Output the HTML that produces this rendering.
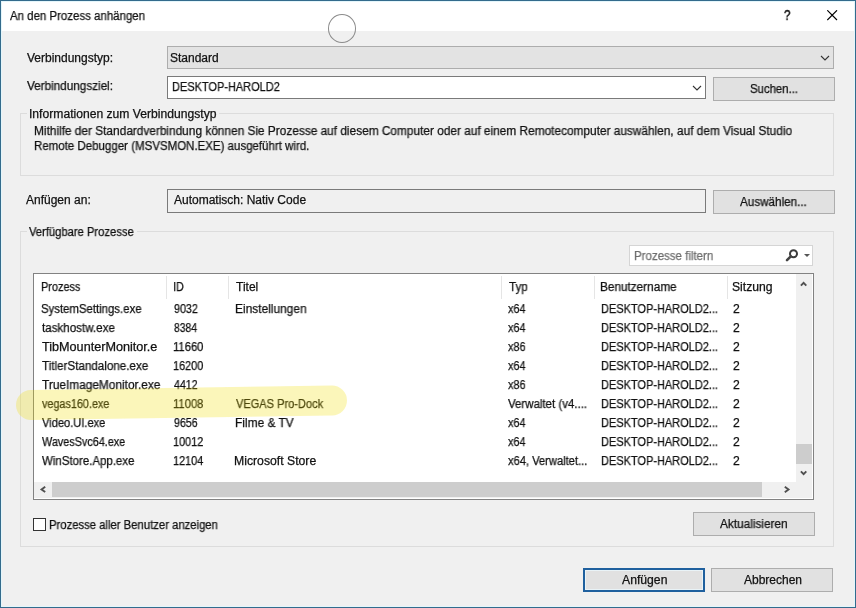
<!DOCTYPE html>
<html><head><meta charset="utf-8"><style>
*{margin:0;padding:0;box-sizing:border-box}
html,body{width:856px;height:608px;overflow:hidden;background:#f0f0f0}
body{position:relative;font-family:"Liberation Sans",sans-serif;font-size:12px;color:#000}
.a{position:absolute}
.t{position:absolute;white-space:nowrap;line-height:16px;font-size:12px;transform-origin:0 0;color:#111;will-change:transform;-webkit-text-stroke-width:0.25px}
.btn{position:absolute;background:#e1e1e1;border:1px solid #adadad}
.grp{position:absolute;border:1px solid #dcdcdc}
</style></head><body>

<div class="a" style="left:0;top:0;width:856px;height:608px;border:1px solid #336b8c"></div>
<div class="a" style="left:1px;top:1px;width:854px;height:30px;background:#fff"></div>
<div class="a" style="left:1px;top:1px;width:854px;height:606px;border:1px solid #e4f6fb"></div>
<div class="t" style="left:783.5px;top:7px;font-size:14px;-webkit-text-stroke-width:0.45px;transform:scaleX(0.82)">?</div>
<svg class="a" style="left:827px;top:10px" width="11" height="11" viewBox="0 0 11 11"><path d="M0.3 0.3L10 10M10 0.3L0.3 10" stroke="#000" stroke-width="1.15"/></svg>
<div class="a" style="left:327.5px;top:13.5px;width:28.5px;height:29px;border:1.5px solid #8c8c8c;border-radius:50%"></div>

<div class="a" style="left:167px;top:46px;width:667px;height:23px;background:#e3e3e3;border:1px solid #adadad"></div>
<svg class="a" style="left:820px;top:55px" width="10" height="6" viewBox="0 0 10 6"><path d="M1 1L5 5L9 1" stroke="#333" fill="none" stroke-width="1.1"/></svg>

<div class="a" style="left:167px;top:76px;width:539px;height:23px;background:#fff;border:1px solid #7a7a7a"></div>
<svg class="a" style="left:692px;top:85px" width="10" height="6" viewBox="0 0 10 6"><path d="M1 1L5 5L9 1" stroke="#333" fill="none" stroke-width="1.1"/></svg>
<div class="btn" style="left:713px;top:77px;width:122px;height:24px"></div>

<div class="grp" style="left:20px;top:113px;width:814px;height:63px"></div>
<div class="a" style="left:27px;top:108px;width:192px;height:10px;background:#f0f0f0"></div>

<div class="a" style="left:167px;top:189px;width:539px;height:24px;background:#f0f0f0;border:1px solid #7a7a7a"></div>
<div class="btn" style="left:713px;top:190px;width:122px;height:24px"></div>

<div class="grp" style="left:20px;top:231px;width:814px;height:316px"></div>
<div class="a" style="left:27px;top:226px;width:110px;height:10px;background:#f0f0f0"></div>

<div class="a" style="left:629px;top:245px;width:184px;height:21px;background:#fff;border:1px solid #d5d5d5"></div>
<svg class="a" style="left:782px;top:248px" width="30" height="16" viewBox="0 0 30 16">
<circle cx="11.5" cy="5.7" r="3.5" stroke="#3c3c3c" stroke-width="2" fill="none"/>
<path d="M8.8 8.4L5 12.2" stroke="#444" stroke-width="2.6" stroke-linecap="round"/>
<path d="M22 6L28 6L25 9Z" fill="#555"/>
</svg>

<div class="a" style="left:33px;top:273px;width:781px;height:227px;background:#fff;border:1px solid #828282"></div>
<div class="a" style="left:796px;top:274px;width:16px;height:224px;background:#f0f0f0"></div>
<div class="a" style="left:34px;top:482px;width:778px;height:16px;background:#f0f0f0"></div>
<div class="a" style="left:52px;top:482px;width:710px;height:15px;background:#cdcdcd"></div>
<div class="a" style="left:796px;top:444px;width:16px;height:20px;background:#cdcdcd"></div>
<div class="a" style="left:812px;top:274px;width:1px;height:225px;background:#fff"></div>
<div class="a" style="left:34px;top:498px;width:779px;height:1px;background:#fff"></div>
<svg class="a" style="left:798px;top:279px" width="12" height="10" viewBox="0 0 12 10"><path d="M2.9 6.6L5.6 3.8L8.3 6.6" stroke="#505050" fill="none" stroke-width="1.9"/></svg>
<svg class="a" style="left:798px;top:467px" width="12" height="10" viewBox="0 0 12 10"><path d="M2.9 4.4L5.6 7.2L8.3 4.4" stroke="#505050" fill="none" stroke-width="1.9"/></svg>
<svg class="a" style="left:38px;top:484px" width="10" height="12" viewBox="0 0 10 12"><path d="M7.2 2.7L3.5 5.4L7.2 8.1" stroke="#505050" fill="none" stroke-width="1.9"/></svg>
<svg class="a" style="left:782px;top:484px" width="10" height="12" viewBox="0 0 10 12"><path d="M2.8 2.8L6.5 5.5L2.8 8.2" stroke="#505050" fill="none" stroke-width="1.9"/></svg>
<div class="a" style="left:166px;top:276px;width:1px;height:23px;background:#e5e5e5"></div><div class="a" style="left:228px;top:276px;width:1px;height:23px;background:#e5e5e5"></div><div class="a" style="left:501px;top:276px;width:1px;height:23px;background:#e5e5e5"></div><div class="a" style="left:594px;top:276px;width:1px;height:23px;background:#e5e5e5"></div><div class="a" style="left:727px;top:276px;width:1px;height:23px;background:#e5e5e5"></div>
<div class="a" style="left:33px;top:518px;width:13px;height:13px;border:1px solid #333;background:#fff"></div>
<div class="btn" style="left:693px;top:512px;width:122px;height:24px"></div>
<div class="btn" style="left:583px;top:568px;width:122px;height:24px;border:2px solid #1f609e;box-shadow:inset 0 0 0 1px #e9f3f7"></div>
<div class="btn" style="left:711px;top:568px;width:122px;height:24px"></div>

<div class="t" style="left:9.70px;top:8px;transform:scaleX(0.9546);">An den Prozess anhängen</div>
<div class="t" style="left:26.50px;top:50px;">Verbindungstyp:</div>
<div class="t" style="left:170.10px;top:50px;">Standard</div>
<div class="t" style="left:26.50px;top:78px;transform:scaleX(0.9770);">Verbindungsziel:</div>
<div class="t" style="left:172.19px;top:79px;transform:scaleX(0.9145);">DESKTOP-HAROLD2</div>
<div class="t" style="left:749.85px;top:81px;transform:scaleX(0.9469);">Suchen...</div>
<div class="t" style="left:28.69px;top:106px;transform:scaleX(1.0109);">Informationen zum Verbindungstyp</div>
<div class="t" style="left:33.81px;top:123px;transform:scaleX(0.9876);">Mithilfe der Standardverbindung können Sie Prozesse auf diesem Computer oder auf einem Remotecomputer auswählen, auf dem Visual Studio</div>
<div class="t" style="left:33.84px;top:138px;transform:scaleX(0.9580);">Remote Debugger (MSVSMON.EXE) ausgeführt wird.</div>
<div class="t" style="left:26.40px;top:192px;">Anfügen an:</div>
<div class="t" style="left:173.80px;top:192px;">Automatisch: Nativ Code</div>
<div class="t" style="left:740.30px;top:194px;transform:scaleX(0.9735);">Auswählen...</div>
<div class="t" style="left:29.30px;top:224px;transform:scaleX(0.9339);">Verfügbare Prozesse</div>
<div class="t" style="left:633.64px;top:248px;transform:scaleX(0.9593);color:#6d6d6d">Prozesse filtern</div>
<div class="t" style="left:40.59px;top:279px;transform:scaleX(0.9095);">Prozess</div>
<div class="t" style="left:172.59px;top:279px;transform:scaleX(0.9091);">ID</div>
<div class="t" style="left:235.50px;top:279px;">Titel</div>
<div class="t" style="left:508.60px;top:279px;transform:scaleX(0.9632);">Typ</div>
<div class="t" style="left:600.02px;top:279px;transform:scaleX(0.9818);">Benutzername</div>
<div class="t" style="left:732.39px;top:279px;transform:scaleX(1.0132);">Sitzung</div>
<div class="t" style="left:40.55px;top:301px;transform:scaleX(0.9476);">SystemSettings.exe</div>
<div class="t" style="left:173.50px;top:301px;transform:scaleX(0.8962);">9032</div>
<div class="t" style="left:234.51px;top:301px;transform:scaleX(0.9930);">Einstellungen</div>
<div class="t" style="left:508.00px;top:301px;transform:scaleX(0.9053);">x64</div>
<div class="t" style="left:600.58px;top:301px;transform:scaleX(0.9151);">DESKTOP-HAROLD2...</div>
<div class="t" style="left:733.10px;top:301px;transform:scaleX(1.0167);">2</div>
<div class="t" style="left:41.50px;top:320px;transform:scaleX(0.9667);">taskhostw.exe</div>
<div class="t" style="left:173.50px;top:320px;transform:scaleX(0.8630);">8384</div>
<div class="t" style="left:508.00px;top:320px;transform:scaleX(0.9053);">x64</div>
<div class="t" style="left:600.58px;top:320px;transform:scaleX(0.9151);">DESKTOP-HAROLD2...</div>
<div class="t" style="left:733.10px;top:320px;transform:scaleX(1.0167);">2</div>
<div class="t" style="left:41.50px;top:339px;transform:scaleX(1.0523);">TibMounterMonitor.e</div>
<div class="t" style="left:172.56px;top:339px;transform:scaleX(0.9355);">11660</div>
<div class="t" style="left:508.00px;top:339px;transform:scaleX(0.9053);">x86</div>
<div class="t" style="left:600.58px;top:339px;transform:scaleX(0.9151);">DESKTOP-HAROLD2...</div>
<div class="t" style="left:733.10px;top:339px;transform:scaleX(1.0167);">2</div>
<div class="t" style="left:41.50px;top:358px;transform:scaleX(0.9688);">TitlerStandalone.exe</div>
<div class="t" style="left:172.59px;top:358px;transform:scaleX(0.9062);">16200</div>
<div class="t" style="left:508.00px;top:358px;transform:scaleX(0.9053);">x64</div>
<div class="t" style="left:600.58px;top:358px;transform:scaleX(0.9151);">DESKTOP-HAROLD2...</div>
<div class="t" style="left:733.10px;top:358px;transform:scaleX(1.0167);">2</div>
<div class="t" style="left:41.50px;top:377px;transform:scaleX(0.9891);">TrueImageMonitor.exe</div>
<div class="t" style="left:173.50px;top:377px;transform:scaleX(0.8846);">4412</div>
<div class="t" style="left:508.00px;top:377px;transform:scaleX(0.9053);">x86</div>
<div class="t" style="left:600.58px;top:377px;transform:scaleX(0.9151);">DESKTOP-HAROLD2...</div>
<div class="t" style="left:733.10px;top:377px;transform:scaleX(1.0167);">2</div>
<div class="t" style="left:41.50px;top:396px;transform:scaleX(0.9014);">vegas160.exe</div>
<div class="t" style="left:172.56px;top:396px;transform:scaleX(0.9355);">11008</div>
<div class="t" style="left:235.50px;top:396px;transform:scaleX(0.9200);">VEGAS Pro-Dock</div>
<div class="t" style="left:508.00px;top:396px;transform:scaleX(0.9561);">Verwaltet (v4....</div>
<div class="t" style="left:600.58px;top:396px;transform:scaleX(0.9151);">DESKTOP-HAROLD2...</div>
<div class="t" style="left:733.10px;top:396px;transform:scaleX(1.0167);">2</div>
<div class="t" style="left:41.50px;top:415px;transform:scaleX(0.9250);">Video.UI.exe</div>
<div class="t" style="left:173.50px;top:415px;transform:scaleX(0.8846);">9656</div>
<div class="t" style="left:234.51px;top:415px;transform:scaleX(0.9931);">Filme &amp; TV</div>
<div class="t" style="left:508.00px;top:415px;transform:scaleX(0.9053);">x64</div>
<div class="t" style="left:600.58px;top:415px;transform:scaleX(0.9151);">DESKTOP-HAROLD2...</div>
<div class="t" style="left:733.10px;top:415px;transform:scaleX(1.0167);">2</div>
<div class="t" style="left:41.50px;top:434px;transform:scaleX(0.9022);">WavesSvc64.exe</div>
<div class="t" style="left:172.59px;top:434px;transform:scaleX(0.9062);">10012</div>
<div class="t" style="left:508.00px;top:434px;transform:scaleX(0.9053);">x64</div>
<div class="t" style="left:600.58px;top:434px;transform:scaleX(0.9151);">DESKTOP-HAROLD2...</div>
<div class="t" style="left:733.10px;top:434px;transform:scaleX(1.0167);">2</div>
<div class="t" style="left:41.50px;top:453px;transform:scaleX(0.9562);">WinStore.App.exe</div>
<div class="t" style="left:172.59px;top:453px;transform:scaleX(0.9062);">12104</div>
<div class="t" style="left:234.48px;top:453px;transform:scaleX(1.0190);">Microsoft Store</div>
<div class="t" style="left:508.00px;top:453px;transform:scaleX(0.9294);">x64, Verwaltet...</div>
<div class="t" style="left:600.58px;top:453px;transform:scaleX(0.9151);">DESKTOP-HAROLD2...</div>
<div class="t" style="left:733.10px;top:453px;transform:scaleX(1.0167);">2</div>
<div class="t" style="left:48.96px;top:517px;transform:scaleX(0.9410);">Prozesse aller Benutzer anzeigen</div>
<div class="t" style="left:720.30px;top:516px;transform:scaleX(0.9853);">Aktualisieren</div>
<div class="t" style="left:621.70px;top:572px;transform:scaleX(1.0159);">Anfügen</div>
<div class="t" style="left:743.80px;top:572px;">Abbrechen</div>
<svg class="a" style="left:0;top:370px" width="370" height="60" viewBox="0 370 370 60"><path d="M31 405L332 400.5" stroke="rgba(240,222,0,0.27)" stroke-width="30" stroke-linecap="round"/></svg>
</body></html>
